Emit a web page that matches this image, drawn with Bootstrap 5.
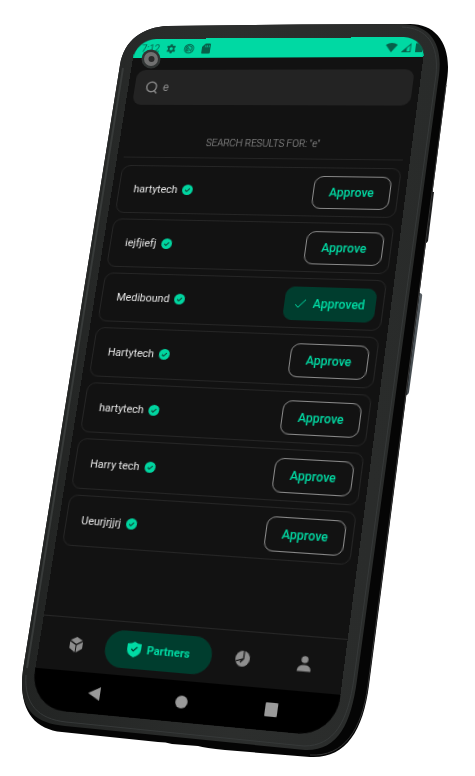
<!DOCTYPE html>
<html lang="en">
<head>
<meta charset="utf-8">
<meta name="viewport" content="width=device-width, initial-scale=1">
<title>Partners</title>
<link href="https://cdn.jsdelivr.net/npm/bootstrap@5.3.0/dist/css/bootstrap.min.css" rel="stylesheet">
<style>
body { background: #fff; font-family: Roboto, "Liberation Sans", sans-serif; color: #e6e6e6; font-size: 11px; line-height: 16px; }
.stage { position: relative; min-height: 776px; overflow: hidden; }
.phone-shell { position: absolute; top: 0; left: 0; width: 475px; height: 776px; }
/* the handset's 3D tilt: projects the flat screen onto the drawn shell */
.screen {
  width: 300px; min-height: 690px; background: #121212; overflow: hidden;
  border-radius: 22px 22px 36px 36px; transform-origin: 0 0;
  transform: matrix3d(.90758,-.011797,0,-.00013869, -.15779,.90322,0,-.00009371, 0,0,1,0, 136,39,0,1);
}
.status { height: 21px; background: #00d9a3; color: #07604a; padding: 0 2px 0 8px; font-size: 10px; }
.status .clock { width: 26px; }
.gutter { padding: 0 7px; }
.finder { height: 38px; margin-top: 13px; padding: 0 12px; background: #232323; border-radius: 9px; color: #8c8c8c; gap: 5px; }
.finder input { font-size: 12px; line-height: 16px; color: #8c8c8c; background: none; border: 0; outline: 0; padding: 0; width: 100%; }
.results-title { height: 57px; padding-top: 33px; font-size: 10px; line-height: 16px; font-weight: 300; color: #a0a0a0; margin: 0 0 8px; border-bottom: 1px solid #242424; }
.partner { height: 51px; padding: 0 7px 0 15px; border: 1px solid #252525; border-radius: 9px; }
.partner-list { gap: 6px; }
.partner-name { gap: 5px; }
.act { height: 34px; min-width: 77px; padding: 0 8px; border: 1px solid #8a8a8a; border-radius: 9px; background: none; color: #00dba4; font-size: 12px; line-height: 16px; font-weight: 500; }
.act.done { min-width: 90px; background: #003d2e; border-color: #003d2e; gap: 6px; }
.tabs { height: 52px; padding: 0 8px; border-top: 1px solid #262626; }
.tabs a { color: #8e8e8e; text-decoration: none; }
.tabs a.current { flex: 0 0 106px; height: 36px; border-radius: 18px; background: #003d2e; color: #00dba4; font-size: 11px; font-weight: 700; gap: 6px; }
.sysbar { height: 39px; padding: 0 20px; background: #000; }
.sysbar button { background: none; border: 0; padding: 0; color: #9a9a9a; }
svg { display: block; flex: none; }
.camera { position: absolute; left: 141px; top: 49px; }
</style>
<script src="https://cdn.jsdelivr.net/npm/bootstrap@5.3.0/dist/js/bootstrap.bundle.min.js"></script>
</head>
<body>
<svg width="0" height="0" class="position-absolute" aria-hidden="true">
  <symbol id="verified" viewBox="0 0 12 12"><circle cx="6" cy="6" r="6" fill="#00d5a0"/><path d="M3.400 6.300 5.300 8 8.600 4.400" fill="none" stroke="#103c30" stroke-width="1.200"/></symbol>
</svg>
<main class="stage">
  <svg class="phone-shell" viewBox="0 0 475 776" aria-hidden="true">
    <defs>
      <linearGradient id="rim" x1="0" x2="1" y1="0" y2="0"><stop offset="0" stop-color="#222423"/><stop offset=".5" stop-color="#2c2e2d"/><stop offset="1" stop-color="#292b2a"/></linearGradient>
      <linearGradient id="key" x1="0" x2="1" y1="0" y2="0"><stop offset="0" stop-color="#3b4145"/><stop offset="1" stop-color="#596065"/></linearGradient>
    </defs>
    <path d="M431 192l3 0-6 49q-1 3-5 2z" fill="#1c1d1e"/>
    <path d="M419 293q4 0 3 4l-13 95q-1 4-5 3z" fill="url(#key)"/>
    <path d="M120 65C124 40 143 27 168 26L300 24.500 410 24C436 24 451 44 447.500 76L369 685C363 732 345 759 310 757L225 750Q205 748 198 746L172 744Q166 742 158 742L62 732C32 729 18 707 23 670Z" fill="#050505"/>
    <path d="M446 85 368 685C362 730 344 757 310 755" fill="none" stroke="#343434" stroke-width="1"/>
    <path d="M120 65C124 40 143 27 168 26L300 24.500 402 24C430 25 443 43 439 75L357 680C351 724 338 751 305 750L65 726C32 723 18 707 23 670Z" fill="url(#rim)"/>
    <path d="M402 27C427 28 439 44 436 75L354 678C348 722 334 746 304 746L66 722C38 719 24 704 26 675" fill="none" stroke="#363939" stroke-width="1"/>
    <path d="M123 68 27 668" stroke="#383b3a" stroke-width="2"/>
  </svg>

  <div class="screen d-flex flex-column">
    <div class="status d-flex align-items-center">
      <span class="clock">7:12</span>
      <svg width="11" height="12" viewBox="0 0 24 24"><path fill="currentColor" fill-rule="evenodd" d="M10 1h4l.6 3 2.400 1.400 3-1 2 3.500-2.300 2.100v4l2.300 2.100-2 3.500-3-1-2.400 1.400-.6 3h-4l-.6-3L7 18.600l-3 1-2-3.500L4.300 14v-4L2 7.900l2-3.500 3 1L9.400 4zM12 8a4 4 0 1 0 0 8 4 4 0 0 0 0-8z"/></svg>
      <svg class="ms-2" width="11" height="12" viewBox="0 0 24 24" fill="none" stroke="currentColor" stroke-width="2.200"><circle cx="12" cy="12" r="10.500"/><path d="M8 18a7 7 0 1 1 9-2M8 8l9 10M8 10v5l4 3"/></svg>
      <svg class="ms-2" width="9" height="12" viewBox="0 0 18 22"><path fill="currentColor" fill-rule="evenodd" d="M7 0h9q2 0 2 2v18q0 2-2 2H2q-2 0-2-2V7zM7 4v4h1.500V4zm3.500 0v4H12V4zM14 4v4h1.500V4z"/></svg>
      <svg class="ms-auto" width="12" height="10" viewBox="0 0 24 20"><path fill="currentColor" d="M0 4Q12-4 24 4L12 20z"/></svg>
      <svg class="ms-1" width="10" height="10" viewBox="0 0 20 20"><path fill="none" stroke="currentColor" stroke-width="2" d="M18 3v16H2z"/><path fill="currentColor" d="M2 19 11 10v9z"/></svg>
      <svg class="ms-1" width="7" height="11" viewBox="0 0 14 22"><path fill="currentColor" d="M4 0h6v3h4v19H0V3h4z"/></svg>
    </div>

    <div class="gutter flex-grow-1">
      <label class="finder d-flex align-items-center">
        <svg width="13" height="14" viewBox="0 0 13 14" fill="none" stroke="currentColor" stroke-width="1.400"><circle cx="6" cy="6.500" r="5.200"/><path d="m9 10.500 3 3"/></svg>
        <input type="text" value="e" aria-label="Search partners">
      </label>
      <h1 class="results-title text-center">SEARCH RESULTS FOR: "e"</h1>
      <div class="partner-list d-flex flex-column">
        <div class="partner d-flex align-items-center justify-content-between"><span class="partner-name d-flex align-items-center">hartytech <svg width="11" height="11"><use href="#verified"/></svg></span><button class="act">Approve</button></div>
        <div class="partner d-flex align-items-center justify-content-between"><span class="partner-name d-flex align-items-center">iejfjiefj <svg width="11" height="11"><use href="#verified"/></svg></span><button class="act">Approve</button></div>
        <div class="partner d-flex align-items-center justify-content-between"><span class="partner-name d-flex align-items-center">Medibound <svg width="11" height="11"><use href="#verified"/></svg></span><button class="act done d-flex align-items-center justify-content-center"><svg width="12" height="10" viewBox="0 0 12 10" fill="none" stroke="currentColor"><path d="m1 6 3 3 7-8"/></svg>Approved</button></div>
        <div class="partner d-flex align-items-center justify-content-between"><span class="partner-name d-flex align-items-center">Hartytech <svg width="11" height="11"><use href="#verified"/></svg></span><button class="act">Approve</button></div>
        <div class="partner d-flex align-items-center justify-content-between"><span class="partner-name d-flex align-items-center">hartytech <svg width="11" height="11"><use href="#verified"/></svg></span><button class="act">Approve</button></div>
        <div class="partner d-flex align-items-center justify-content-between"><span class="partner-name d-flex align-items-center">Harry tech <svg width="11" height="11"><use href="#verified"/></svg></span><button class="act">Approve</button></div>
        <div class="partner d-flex align-items-center justify-content-between"><span class="partner-name d-flex align-items-center">Ueurjrjjrj <svg width="11" height="11"><use href="#verified"/></svg></span><button class="act">Approve</button></div>
      </div>
    </div>

    <nav class="tabs d-flex align-items-center" aria-label="Sections">
      <a href="#" class="flex-fill d-flex justify-content-center" aria-label="Products"><svg width="13" height="15" viewBox="0 0 26 30" fill="currentColor"><path d="M13 0 25 6.500 13 13.500 1 6.500zM0 9l12 7v14L0 22zM26 9l-12 7v14L26 22z"/></svg></a>
      <a href="#" class="current d-flex align-items-center justify-content-center" aria-current="page"><svg width="14" height="15" viewBox="0 0 28 30"><path fill="currentColor" d="M14 0q5 4 14 4v10q0 11-14 16Q0 25 0 14V4q9 0 14-4z"/><path fill="none" stroke="#003d2e" stroke-width="2.400" d="m8.500 14 4 4 7.500-8"/></svg>Partners</a>
      <a href="#" class="flex-fill d-flex justify-content-center" aria-label="Statistics"><svg width="14" height="15" viewBox="0 0 28 30"><ellipse cx="14" cy="15" rx="14" ry="15" fill="currentColor"/><path fill="none" stroke="#121212" stroke-width="2.400" d="M16 0v15L1 20M16 15l-6 7"/></svg></a>
      <a href="#" class="flex-fill d-flex justify-content-center" aria-label="Profile"><svg width="13" height="15" viewBox="0 0 26 30" fill="currentColor"><circle cx="13" cy="7" r="6.500"/><path d="M0 29v-2q1-10 13-10t13 10v2z"/></svg></a>
    </nav>
    <div class="sysbar d-flex align-items-center">
      <button class="flex-fill d-flex justify-content-center" aria-label="Back"><svg width="12" height="13" viewBox="0 0 12 13"><path fill="currentColor" d="M12 0v13L0 6.500z"/></svg></button>
      <button class="flex-fill d-flex justify-content-center" aria-label="Home"><svg width="12" height="12" viewBox="0 0 12 12"><circle cx="6" cy="6" r="6" fill="currentColor"/></svg></button>
      <button class="flex-fill d-flex justify-content-center" aria-label="Overview"><svg width="12" height="13" viewBox="0 0 12 13"><rect width="12" height="13" rx="1" fill="currentColor"/></svg></button>
    </div>
  </div>
  <svg class="camera" width="20" height="20" viewBox="0 0 20 20" aria-hidden="true"><circle cx="10" cy="10" r="9.500" fill="#303433"/><circle cx="10" cy="10" r="7" fill="#707070"/><circle cx="10.500" cy="10" r="3" fill="#2b2b2b"/></svg>
</main>
</body>
</html>
